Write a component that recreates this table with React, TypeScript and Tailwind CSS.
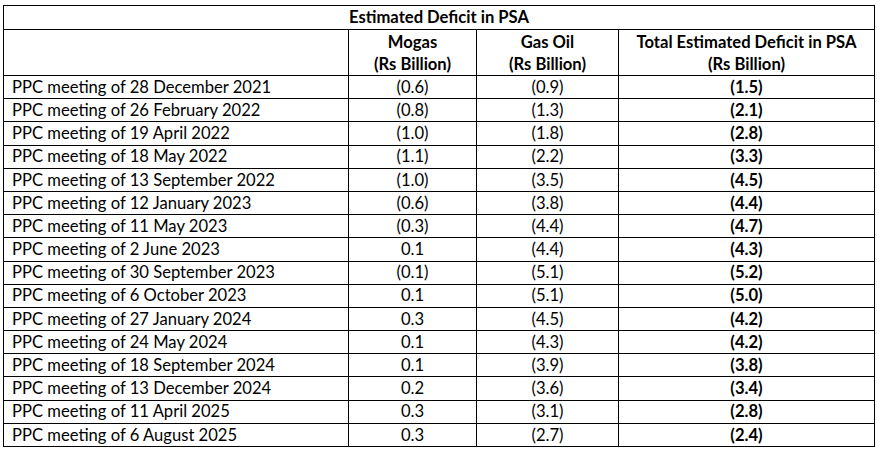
const rows: [string, string, string, string][] = [
  ['PPC meeting of 28 December 2021', '(0.6)', '(0.9)', '(1.5)'],
  ['PPC meeting of 26 February 2022', '(0.8)', '(1.3)', '(2.1)'],
  ['PPC meeting of 19 April 2022', '(1.0)', '(1.8)', '(2.8)'],
  ['PPC meeting of 18 May 2022', '(1.1)', '(2.2)', '(3.3)'],
  ['PPC meeting of 13 September 2022', '(1.0)', '(3.5)', '(4.5)'],
  ['PPC meeting of 12 January 2023', '(0.6)', '(3.8)', '(4.4)'],
  ['PPC meeting of 11 May 2023', '(0.3)', '(4.4)', '(4.7)'],
  ['PPC meeting of 2 June 2023', '0.1', '(4.4)', '(4.3)'],
  ['PPC meeting of 30 September 2023', '(0.1)', '(5.1)', '(5.2)'],
  ['PPC meeting of 6 October 2023', '0.1', '(5.1)', '(5.0)'],
  ['PPC meeting of 27 January 2024', '0.3', '(4.5)', '(4.2)'],
  ['PPC meeting of 24 May 2024', '0.1', '(4.3)', '(4.2)'],
  ['PPC meeting of 18 September 2024', '0.1', '(3.9)', '(3.8)'],
  ['PPC meeting of 13 December 2024', '0.2', '(3.6)', '(3.4)'],
  ['PPC meeting of 11 April 2025', '0.3', '(3.1)', '(2.8)'],
  ['PPC meeting of 6 August 2025', '0.3', '(2.7)', '(2.4)'],
];

export default function App() {
  return (
    <div className="w-[877px] h-[450px] bg-white pt-[5px] pl-[3px] font-['Lato',sans-serif] text-[16.6px] text-black">
      <table className="w-[871px] border-collapse table-fixed">
        <colgroup>
          <col className="w-[345px]" />
          <col className="w-[128px]" />
          <col className="w-[142px]" />
          <col className="w-[256px]" />
        </colgroup>
        <thead>
          <tr className="h-[24px]">
            <th colSpan={4} className="border border-black p-0 text-center font-bold leading-none">
              Estimated Deficit in PSA
            </th>
          </tr>
          <tr className="h-[46px]">
            <th className="border border-black p-0" />
            <th className="border border-black p-0 text-center font-bold leading-[22px]">
              Mogas
              <br />
              (Rs Billion)
            </th>
            <th className="border border-black p-0 text-center font-bold leading-[22px]">
              Gas Oil
              <br />
              (Rs Billion)
            </th>
            <th className="border border-black p-0 text-center font-bold leading-[22px]">
              Total Estimated Deficit in PSA
              <br />
              (Rs Billion)
            </th>
          </tr>
        </thead>
        <tbody>
          {rows.map(([label, mogas, gasOil, total]) => (
            <tr key={label} className="h-[23.19px]">
              <td className="border border-black py-0 pl-[8px] leading-none">{label}</td>
              <td className="border border-black p-0 text-center leading-none">{mogas}</td>
              <td className="border border-black p-0 text-center leading-none">{gasOil}</td>
              <td className="border border-black p-0 text-center font-bold leading-none">{total}</td>
            </tr>
          ))}
        </tbody>
      </table>
    </div>
  );
}
